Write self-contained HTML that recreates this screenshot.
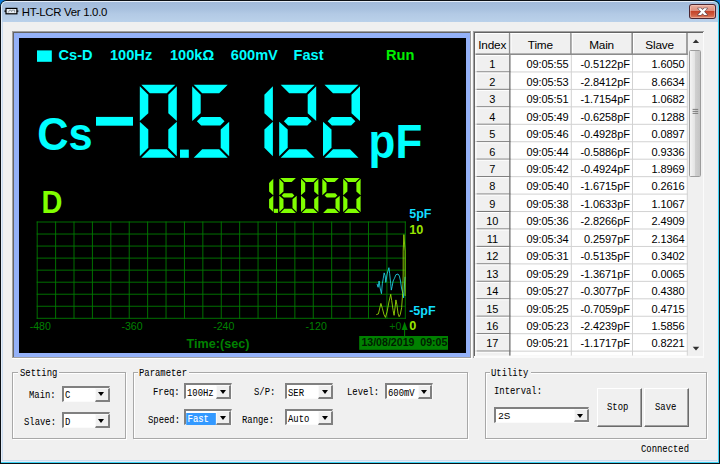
<!DOCTYPE html>
<html><head><meta charset="utf-8"><title>HT-LCR Ver 1.0.0</title>
<style>
html,body{margin:0;padding:0}
body{width:720px;height:464px;position:relative;overflow:hidden;background:#f0f0f0;font-family:"Liberation Sans",sans-serif}
div{position:absolute;box-sizing:border-box}
#frame{left:0;top:0;width:720px;height:464px;background:#0b78d6}
#win{left:0;top:0;width:720px;height:464px;background:#0c1014;border-radius:6.5px 6.5px 0 0}
#win2{left:.9px;top:.8px;width:718.2px;height:461.8px;background:#3fd2f4;border-radius:5.5px 5.5px 0 0}
#win3{left:.9px;top:.8px;width:716.9px;height:460.8px;background:#e4edf8;border-radius:5.5px 5.5px 0 0}
#tbar{left:1.7px;top:1.9px;width:716px;height:20.1px;border-radius:4.5px 4.5px 0 0;
 background:linear-gradient(#a2bbdb 0%,#a8c1df 35%,#b3cae5 60%,#bad1ea 100%)}
#side{left:1.9px;top:22px;width:715.6px;height:439.4px;background:#cbdcf0}
#client{left:3.1px;top:21.8px;width:713.6px;height:438.5px;background:#f0f0f0}
#title{left:21.8px;top:4.6px;font-size:11.4px;letter-spacing:-.29px;color:#000;white-space:nowrap;line-height:14px}
#close{left:688.6px;top:4.2px;width:27.4px;height:14.6px;border-radius:3px;background:#4a2530}
#close i{position:absolute;left:1px;top:1px;right:1px;bottom:1px;border-radius:2.2px;
 background:linear-gradient(#e8aea0 0%,#dc8f7e 45%,#c4442a 50%,#cd5a3e 75%,#dc8468 100%);
 box-shadow:inset 0 0 0 .8px rgba(255,220,210,.55)}
#lcdo{left:12px;top:31px;width:460.4px;height:328.4px;background:#fff}
#lcdo1{left:12px;top:31px;width:459.2px;height:327.2px;background:#a0a0a0}
#lcdo2{left:13.1px;top:32.1px;width:457.3px;height:325.3px;background:#646464}
#lcdb{left:14.3px;top:33.3px;width:455.7px;height:323.9px;background:#94b1f8}
#lcd{left:18.8px;top:38.3px;width:447px;height:314.5px;background:#000}
svg{position:absolute;left:0;top:0}
/* table */
#tbo{left:473.4px;top:31.3px;width:230.8px;height:326.3px;background:#fbfbfb;border-top:1px solid #a0a0a0;border-left:1px solid #a0a0a0}
#tbo1{display:none}
#tbo2{left:474.4px;top:32.2px;width:228.3px;height:323.4px;background:#f0f0f0;border-top:1.2px solid #646464;border-left:1.2px solid #646464}
#tbl{left:473px;top:31px;width:231px;height:324.6px;overflow:hidden}
#tbg{left:2.4px;top:2px;width:226.3px;height:322.6px;background:#fff}
.c{font-size:11px;letter-spacing:-.09px;color:#000;white-space:nowrap;overflow:hidden;text-align:right;padding-right:3.2px}
.c.d{padding-top:.3px}
.c.h{font-size:11.8px;letter-spacing:-.2px;text-align:center;padding:0 1.6px 0 0;padding-top:1.1px}
.c.rh{text-align:center;padding:0 1.3px 0 0;padding-top:.3px}
#sb{left:688px;top:33.2px;width:14.6px;height:322.4px;background:#f0f0f0}
#thumb{left:689.4px;top:49.8px;width:12px;height:126.8px;border:1px solid #9c9c9c;border-radius:1.5px;
 background:linear-gradient(90deg,#f4f4f4 0%,#e4e4e4 45%,#cfcfcf 55%,#c4c4c4 100%)}
/* controls */
.m{font-family:"Liberation Mono",monospace;font-size:11.4px;line-height:13px;color:#000;white-space:pre;
 transform:scaleX(.78);transform-origin:0 0;letter-spacing:0;-webkit-text-stroke:.04px #000}
.gb{border:1px solid #a8a8a8;box-shadow:1px 1px 0 #fff,inset 1px 1px 0 #fff}
.gl{height:6px;background:#f0f0f0}
.cb{background:#fff;border:2px solid #808080;border-right:1px solid #fbfbfb;border-bottom:1px solid #fbfbfb}
.cbt{left:1.2px;top:1.6px;font-family:"Liberation Mono",monospace;font-size:11.4px;line-height:12.4px;white-space:pre;transform:scaleX(.78);transform-origin:0 0;-webkit-text-stroke:.04px #000}
.cbt.s{font-family:"Liberation Sans",sans-serif;font-size:9.8px;transform:none;left:2.1px;top:.6px;-webkit-text-stroke:0}
.sel{background:#3399ff;color:#fff;display:inline-block;padding:0 8.6px 0 1.4px;margin-left:-.6px;height:12.2px;-webkit-text-stroke:.15px #fff}
.cbb{right:-.7px;top:0;bottom:-.7px;width:14.8px;background:#f0f0f0;border:1px solid #fafafa;border-right:2px solid #808080;border-bottom:2px solid #808080}
.cbb i{position:absolute;left:2.6px;top:3.6px;width:0;height:0;border-left:3.6px solid transparent;border-right:3.6px solid transparent;border-top:4px solid #000}
.btn{background:#f0f0f0;border:1px solid #fff;border-right-color:#6a6a6a;border-bottom-color:#6a6a6a;box-shadow:inset -1px -1px 0 #a0a0a0}
</style></head><body>
<div id="frame"></div><div id="win"></div><div id="win2"></div><div id="win3"></div>
<div id="side"></div><div id="tbar"></div><div id="client"></div>
<svg width="720" height="464" viewBox="0 0 720 464" style="z-index:1">
<g fill="none" stroke="#000" stroke-width="1"><rect x="6" y="8.4" width="10.9" height="5.4" fill="#e8eef4" stroke-width="1.2"/>
<path d="M4.4 11.1H6M16.9 11.1H18.4" stroke-width="1.1"/><path d="M8.2 12.6L9.6 10.2H11L11.6 11.6L12.2 10.2H14.6V12.4" stroke="#707880" stroke-width=".7"/></g>
</svg>
<div id="title">HT-LCR Ver 1.0.0</div>
<div id="close"><i></i><svg width="27.4" height="14.6" viewBox="0 0 27.4 14.6"><g stroke="#54404a" stroke-width="1.1" stroke-linejoin="round" fill="#fff"><polygon points="8.9,4.2 12,4.2 18.3,11 15.2,11"/><polygon points="18.3,4.2 15.2,4.2 8.9,11 12,11"/></g><g fill="#fff"><polygon points="8.9,4.2 12,4.2 18.3,11 15.2,11"/><polygon points="18.3,4.2 15.2,4.2 8.9,11 12,11"/></g></svg></div>

<div id="lcdo"></div><div id="lcdo1"></div><div id="lcdo2"></div><div id="lcdb"></div><div id="lcd"></div>
<svg width="720" height="464" viewBox="0 0 720 464">
<g fill="#00ffff">
<rect x="96" y="116.9" width="37" height="8.8"/>
<polygon points="141.3,84.8 175.3,84.8 166.8,93.3 149.8,93.3"/><polygon points="176.8,86.3 168.3,94.8 168.3,113.2 176.8,120.9"/><polygon points="176.8,156.3 168.3,147.8 168.3,129.4 176.8,121.7"/><polygon points="141.3,157.8 175.3,157.8 166.8,149.3 149.8,149.3"/><polygon points="139.8,156.3 148.3,147.8 148.3,129.4 139.8,121.7"/><polygon points="139.8,86.3 148.3,94.8 148.3,113.2 139.8,120.9"/>
<polygon points="193.7,84.8 227.7,84.8 219.2,93.3 202.2,93.3"/><polygon points="192.2,86.3 200.7,94.8 200.7,113.2 192.2,120.9"/><polygon points="196.85,121.3 201.1,117.05 220.3,117.05 224.55,121.3 220.3,125.55 201.1,125.55"/><polygon points="229.2,156.3 220.7,147.8 220.7,129.4 229.2,121.7"/><polygon points="193.7,157.8 227.7,157.8 219.2,149.3 202.2,149.3"/>
<polygon points="272.9,86.3 264.4,94.8 264.4,113.2 272.9,120.9"/><polygon points="272.9,156.3 264.4,147.8 264.4,129.4 272.9,121.7"/>
<polygon points="280.7,84.8 314.7,84.8 306.2,93.3 289.2,93.3"/><polygon points="316.2,86.3 307.7,94.8 307.7,113.2 316.2,120.9"/><polygon points="283.85,121.3 288.1,117.05 307.3,117.05 311.55,121.3 307.3,125.55 288.1,125.55"/><polygon points="279.2,156.3 287.7,147.8 287.7,129.4 279.2,121.7"/><polygon points="280.7,157.8 314.7,157.8 306.2,149.3 289.2,149.3"/>
<polygon points="324.5,84.8 358.5,84.8 350,93.3 333,93.3"/><polygon points="360,86.3 351.5,94.8 351.5,113.2 360,120.9"/><polygon points="327.65,121.3 331.9,117.05 351.1,117.05 355.35,121.3 351.1,125.55 331.9,125.55"/><polygon points="323,156.3 331.5,147.8 331.5,129.4 323,121.7"/><polygon points="324.5,157.8 358.5,157.8 350,149.3 333,149.3"/>
<rect x="180" y="149.6" width="8.8" height="8.2"/>
</g>
<g fill="#80ff00">
<polygon points="273.3,178.7 269.1,182.9 269.1,191.45 273.3,195.15"/><polygon points="273.3,212.1 269.1,207.9 269.1,199.35 273.3,195.65"/>
<polygon points="280.1,177.9 295.9,177.9 291.7,182.1 284.3,182.1"/><polygon points="279.3,178.7 283.5,182.9 283.5,191.45 279.3,195.15"/><polygon points="281.65,195.4 283.75,193.3 292.25,193.3 294.35,195.4 292.25,197.5 283.75,197.5"/><polygon points="279.3,212.1 283.5,207.9 283.5,199.35 279.3,195.65"/><polygon points="280.1,212.9 295.9,212.9 291.7,208.7 284.3,208.7"/><polygon points="296.7,212.1 292.5,207.9 292.5,199.35 296.7,195.65"/>
<polygon points="301.8,177.9 317.6,177.9 313.4,182.1 306,182.1"/><polygon points="318.4,178.7 314.2,182.9 314.2,191.45 318.4,195.15"/><polygon points="318.4,212.1 314.2,207.9 314.2,199.35 318.4,195.65"/><polygon points="301.8,212.9 317.6,212.9 313.4,208.7 306,208.7"/><polygon points="301,212.1 305.2,207.9 305.2,199.35 301,195.65"/><polygon points="301,178.7 305.2,182.9 305.2,191.45 301,195.15"/>
<polygon points="323.1,177.9 338.9,177.9 334.7,182.1 327.3,182.1"/><polygon points="322.3,178.7 326.5,182.9 326.5,191.45 322.3,195.15"/><polygon points="324.65,195.4 326.75,193.3 335.25,193.3 337.35,195.4 335.25,197.5 326.75,197.5"/><polygon points="339.7,212.1 335.5,207.9 335.5,199.35 339.7,195.65"/><polygon points="323.1,212.9 338.9,212.9 334.7,208.7 327.3,208.7"/>
<polygon points="344,177.9 359.8,177.9 355.6,182.1 348.2,182.1"/><polygon points="360.6,178.7 356.4,182.9 356.4,191.45 360.6,195.15"/><polygon points="360.6,212.1 356.4,207.9 356.4,199.35 360.6,195.65"/><polygon points="344,212.9 359.8,212.9 355.6,208.7 348.2,208.7"/><polygon points="343.2,212.1 347.4,207.9 347.4,199.35 343.2,195.65"/><polygon points="343.2,178.7 347.4,182.9 347.4,191.45 343.2,195.15"/>
<rect x="273.9" y="208.8" width="4.2" height="4.1"/>
</g>
<g stroke="#007c00" stroke-width=".9" fill="none">
<path d="M37.2 221.5V318.8M55.61 221.5V318.8M74.01 221.5V318.8M92.42 221.5V318.8M110.82 221.5V318.8M129.23 221.5V318.8M147.63 221.5V318.8M166.04 221.5V318.8M184.44 221.5V318.8M202.85 221.5V318.8M221.25 221.5V318.8M239.66 221.5V318.8M258.06 221.5V318.8M276.47 221.5V318.8M294.87 221.5V318.8M313.27 221.5V318.8M331.68 221.5V318.8M350.09 221.5V318.8M368.49 221.5V318.8M386.9 221.5V318.8M405.3 221.5V318.8M36.7 222H405.8M36.7 234.04H405.8M36.7 246.07H405.8M36.7 258.11H405.8M36.7 270.15H405.8M36.7 282.19H405.8M36.7 294.23H405.8M36.7 306.26H405.8M36.7 318.3H405.8"/>
</g>
<polyline fill="none" stroke="#1fd6e8" stroke-width=".85" stroke-linejoin="round" points="377,283.81 378.12,287.31 379.1,281.01 380.08,288.01 381.48,293.61 382.32,283.81 383.31,278.21 384.15,272.89 385.13,275.69 385.83,282.41 387.09,274.01 388.91,267.7 389.61,273.31 390.73,283.81 391.29,290.11 392.13,286.61 393.11,281.01 394.51,278.21 395.91,274.71 398.01,274.01 399.41,276.11 400.53,281.01 401.51,288.01 402.91,293.61 403.61,297.82 404.31,288.01 405.01,276.81"/>
<polyline fill="none" stroke="#9ee008" stroke-width=".85" stroke-linejoin="round" points="376.3,314.62 378.4,313.92 380.92,303.42 382.32,308.32 384.01,314.62 385.41,317.42 387.09,311.82 388.91,302.02 390.73,294.31 391.71,300.62 393.11,310.42 394.09,315.32 395.21,306.22 395.91,299.92 396.89,304.82 398.01,313.22 399.13,316.72 400.25,314.62 401.65,307.62 402.63,293.61 403.19,274.01 403.19,251.04 403.89,234.65"/>
<polyline fill="none" stroke="#9ee008" stroke-width=".85" stroke-linejoin="round" points="403.89,234.65 405.1,251.04 405.1,295.99"/>
<g font-family="Liberation Sans, sans-serif" font-weight="bold">
<rect x="37" y="50.4" width="14.8" height="11.4" fill="#00ffff"/>
<g fill="#00ffff" font-size="14.6">
<text x="58.5" y="60.3">Cs-D</text>
<text x="110" y="60.3">100Hz</text>
<text x="170" y="60.3">100k&#937;</text>
<text x="230.8" y="60.3">600mV</text>
<text x="293.5" y="60.3">Fast</text>
</g>
<text x="386" y="60.3" font-size="14.6" fill="#00f000">Run</text>
<text transform="translate(37.3,149.8) scale(.922,1)" font-size="47" fill="#00ffff">Cs</text>
<text transform="translate(368.6,158.2) scale(.93,1)" font-size="47.2" fill="#00ffff">pF</text>
<text transform="translate(41.4,212.6) scale(.92,1)" font-size="31.5" fill="#80ff00">D</text>
<text x="409.2" y="217.8" font-size="12.5" fill="#12deff">5pF</text>
<text x="409.2" y="233.5" font-size="12.7" fill="#98e400">10</text>
<text x="409.2" y="314.8" font-size="12.5" fill="#12deff">-5pF</text>
<text x="409.2" y="330.2" font-size="12.7" fill="#98e400">0</text>
<g fill="#008000" font-size="10.6" font-weight="normal" text-anchor="middle">
<text x="40.3" y="330">-480</text>
<text x="132" y="330">-360</text>
<text x="223.8" y="330">-240</text>
<text x="316.2" y="330">-120</text>
<text x="395.3" y="330.2" fill="#007000">+0</text>
</g>
<text x="186.6" y="348.3" font-size="12.6" fill="#008000">Time:(sec)</text>
<polygon points="404.6,321.8 401.6,330 407.6,330" fill="#008000"/>
<rect x="404.1" y="330" width="1" height="6" fill="#008000"/>
<rect x="359.2" y="336" width="88.8" height="13.8" fill="#008000"/>
<text x="361.4" y="345.8" font-size="10.6" fill="#001c00" xml:space="preserve">13/08/2019  09:05</text>
</g>
</svg>

<div id="tbo"></div><div id="tbo1"></div><div id="tbo2"></div>
<div id="tbl">
<svg width="231" height="325" viewBox="0 0 231 325"><rect x="2.5" y="2" width="212.3" height="322.6" fill="#fff"/><rect x="2.5" y="2" width="212.3" height="22" fill="#f0f0f0"/><rect x="2.5" y="2" width="35" height="322.6" fill="#f0f0f0"/><rect x="97.8" y="24" width="1" height="300.6" fill="#d2d2d2"/><rect x="159" y="24" width="1" height="300.6" fill="#d2d2d2"/><rect x="213.8" y="24" width="1" height="300.6" fill="#d2d2d2"/><rect x="37.5" y="40.45" width="177.3" height="1" fill="#d2d2d2"/><rect x="37.5" y="57.9" width="177.3" height="1" fill="#d2d2d2"/><rect x="37.5" y="75.35" width="177.3" height="1" fill="#d2d2d2"/><rect x="37.5" y="92.8" width="177.3" height="1" fill="#d2d2d2"/><rect x="37.5" y="110.25" width="177.3" height="1" fill="#d2d2d2"/><rect x="37.5" y="127.7" width="177.3" height="1" fill="#d2d2d2"/><rect x="37.5" y="145.15" width="177.3" height="1" fill="#d2d2d2"/><rect x="37.5" y="162.6" width="177.3" height="1" fill="#d2d2d2"/><rect x="37.5" y="180.05" width="177.3" height="1" fill="#d2d2d2"/><rect x="37.5" y="197.5" width="177.3" height="1" fill="#d2d2d2"/><rect x="37.5" y="214.95" width="177.3" height="1" fill="#d2d2d2"/><rect x="37.5" y="232.4" width="177.3" height="1" fill="#d2d2d2"/><rect x="37.5" y="249.85" width="177.3" height="1" fill="#d2d2d2"/><rect x="37.5" y="267.3" width="177.3" height="1" fill="#d2d2d2"/><rect x="37.5" y="284.75" width="177.3" height="1" fill="#d2d2d2"/><rect x="37.5" y="302.2" width="177.3" height="1" fill="#d2d2d2"/><rect x="37.5" y="319.65" width="177.3" height="1" fill="#d2d2d2"/><rect x="2.5" y="2" width="35" height="1" fill="#fff"/><rect x="2.5" y="2" width="1" height="22" fill="#fff"/><rect x="35.9" y="2" width="1.6" height="22" fill="#8c8c8c"/><rect x="37.5" y="2" width="61.3" height="1" fill="#fff"/><rect x="37.5" y="2" width="1" height="22" fill="#fff"/><rect x="97.2" y="2" width="1.6" height="22" fill="#8c8c8c"/><rect x="98.8" y="2" width="61.2" height="1" fill="#fff"/><rect x="98.8" y="2" width="1" height="22" fill="#fff"/><rect x="158.4" y="2" width="1.6" height="22" fill="#8c8c8c"/><rect x="160" y="2" width="54.8" height="1" fill="#fff"/><rect x="160" y="2" width="1" height="22" fill="#fff"/><rect x="213.2" y="2" width="1.6" height="22" fill="#8c8c8c"/><rect x="2.5" y="22.4" width="212.3" height="1.6" fill="#8c8c8c"/><rect x="2.5" y="24" width="35" height="1" fill="#fff"/><rect x="2.5" y="40.35" width="35" height="1.1" fill="#7a7a7a"/><rect x="2.5" y="41.45" width="35" height="1" fill="#fff"/><rect x="2.5" y="57.8" width="35" height="1.1" fill="#7a7a7a"/><rect x="2.5" y="58.9" width="35" height="1" fill="#fff"/><rect x="2.5" y="75.25" width="35" height="1.1" fill="#7a7a7a"/><rect x="2.5" y="76.35" width="35" height="1" fill="#fff"/><rect x="2.5" y="92.7" width="35" height="1.1" fill="#7a7a7a"/><rect x="2.5" y="93.8" width="35" height="1" fill="#fff"/><rect x="2.5" y="110.15" width="35" height="1.1" fill="#7a7a7a"/><rect x="2.5" y="111.25" width="35" height="1" fill="#fff"/><rect x="2.5" y="127.6" width="35" height="1.1" fill="#7a7a7a"/><rect x="2.5" y="128.7" width="35" height="1" fill="#fff"/><rect x="2.5" y="145.05" width="35" height="1.1" fill="#7a7a7a"/><rect x="2.5" y="146.15" width="35" height="1" fill="#fff"/><rect x="2.5" y="162.5" width="35" height="1.1" fill="#7a7a7a"/><rect x="2.5" y="163.6" width="35" height="1" fill="#fff"/><rect x="2.5" y="179.95" width="35" height="1.1" fill="#7a7a7a"/><rect x="2.5" y="181.05" width="35" height="1" fill="#fff"/><rect x="2.5" y="197.4" width="35" height="1.1" fill="#7a7a7a"/><rect x="2.5" y="198.5" width="35" height="1" fill="#fff"/><rect x="2.5" y="214.85" width="35" height="1.1" fill="#7a7a7a"/><rect x="2.5" y="215.95" width="35" height="1" fill="#fff"/><rect x="2.5" y="232.3" width="35" height="1.1" fill="#7a7a7a"/><rect x="2.5" y="233.4" width="35" height="1" fill="#fff"/><rect x="2.5" y="249.75" width="35" height="1.1" fill="#7a7a7a"/><rect x="2.5" y="250.85" width="35" height="1" fill="#fff"/><rect x="2.5" y="267.2" width="35" height="1.1" fill="#7a7a7a"/><rect x="2.5" y="268.3" width="35" height="1" fill="#fff"/><rect x="2.5" y="284.65" width="35" height="1.1" fill="#7a7a7a"/><rect x="2.5" y="285.75" width="35" height="1" fill="#fff"/><rect x="2.5" y="302.1" width="35" height="1.1" fill="#7a7a7a"/><rect x="2.5" y="303.2" width="35" height="1" fill="#fff"/><rect x="2.5" y="319.55" width="35" height="1.1" fill="#7a7a7a"/><rect x="2.5" y="320.65" width="35" height="1" fill="#fff"/><rect x="2.5" y="24" width="1" height="300.6" fill="#fff"/><rect x="36.2" y="24" width="1.3" height="300.6" fill="#747474"/></svg>
<div class="c h" style="left:2.5px;top:2px;width:35px;height:22px;line-height:22.6px">Index</div>
<div class="c h" style="left:37.5px;top:2px;width:61.3px;height:22px;line-height:22.6px">Time</div>
<div class="c h" style="left:98.8px;top:2px;width:61.2px;height:22px;line-height:22.6px">Main</div>
<div class="c h" style="left:160px;top:2px;width:54.8px;height:22px;line-height:22.6px">Slave</div>
<div class="c rh" style="left:2.5px;top:24px;width:35px;height:17.45px;line-height:18.05px">1</div>
<div class="c d" style="left:37.5px;top:24px;width:61.3px;height:17.45px;line-height:18.05px">09:05:55</div>
<div class="c d" style="left:98.8px;top:24px;width:61.2px;height:17.45px;line-height:18.05px">-0.5122pF</div>
<div class="c d" style="left:160px;top:24px;width:54.8px;height:17.45px;line-height:18.05px">1.6050</div>
<div class="c rh" style="left:2.5px;top:41.45px;width:35px;height:17.45px;line-height:18.05px">2</div>
<div class="c d" style="left:37.5px;top:41.45px;width:61.3px;height:17.45px;line-height:18.05px">09:05:53</div>
<div class="c d" style="left:98.8px;top:41.45px;width:61.2px;height:17.45px;line-height:18.05px">-2.8412pF</div>
<div class="c d" style="left:160px;top:41.45px;width:54.8px;height:17.45px;line-height:18.05px">8.6634</div>
<div class="c rh" style="left:2.5px;top:58.9px;width:35px;height:17.45px;line-height:18.05px">3</div>
<div class="c d" style="left:37.5px;top:58.9px;width:61.3px;height:17.45px;line-height:18.05px">09:05:51</div>
<div class="c d" style="left:98.8px;top:58.9px;width:61.2px;height:17.45px;line-height:18.05px">-1.7154pF</div>
<div class="c d" style="left:160px;top:58.9px;width:54.8px;height:17.45px;line-height:18.05px">1.0682</div>
<div class="c rh" style="left:2.5px;top:76.35px;width:35px;height:17.45px;line-height:18.05px">4</div>
<div class="c d" style="left:37.5px;top:76.35px;width:61.3px;height:17.45px;line-height:18.05px">09:05:49</div>
<div class="c d" style="left:98.8px;top:76.35px;width:61.2px;height:17.45px;line-height:18.05px">-0.6258pF</div>
<div class="c d" style="left:160px;top:76.35px;width:54.8px;height:17.45px;line-height:18.05px">0.1288</div>
<div class="c rh" style="left:2.5px;top:93.8px;width:35px;height:17.45px;line-height:18.05px">5</div>
<div class="c d" style="left:37.5px;top:93.8px;width:61.3px;height:17.45px;line-height:18.05px">09:05:46</div>
<div class="c d" style="left:98.8px;top:93.8px;width:61.2px;height:17.45px;line-height:18.05px">-0.4928pF</div>
<div class="c d" style="left:160px;top:93.8px;width:54.8px;height:17.45px;line-height:18.05px">0.0897</div>
<div class="c rh" style="left:2.5px;top:111.25px;width:35px;height:17.45px;line-height:18.05px">6</div>
<div class="c d" style="left:37.5px;top:111.25px;width:61.3px;height:17.45px;line-height:18.05px">09:05:44</div>
<div class="c d" style="left:98.8px;top:111.25px;width:61.2px;height:17.45px;line-height:18.05px">-0.5886pF</div>
<div class="c d" style="left:160px;top:111.25px;width:54.8px;height:17.45px;line-height:18.05px">0.9336</div>
<div class="c rh" style="left:2.5px;top:128.7px;width:35px;height:17.45px;line-height:18.05px">7</div>
<div class="c d" style="left:37.5px;top:128.7px;width:61.3px;height:17.45px;line-height:18.05px">09:05:42</div>
<div class="c d" style="left:98.8px;top:128.7px;width:61.2px;height:17.45px;line-height:18.05px">-0.4924pF</div>
<div class="c d" style="left:160px;top:128.7px;width:54.8px;height:17.45px;line-height:18.05px">1.8969</div>
<div class="c rh" style="left:2.5px;top:146.15px;width:35px;height:17.45px;line-height:18.05px">8</div>
<div class="c d" style="left:37.5px;top:146.15px;width:61.3px;height:17.45px;line-height:18.05px">09:05:40</div>
<div class="c d" style="left:98.8px;top:146.15px;width:61.2px;height:17.45px;line-height:18.05px">-1.6715pF</div>
<div class="c d" style="left:160px;top:146.15px;width:54.8px;height:17.45px;line-height:18.05px">0.2616</div>
<div class="c rh" style="left:2.5px;top:163.6px;width:35px;height:17.45px;line-height:18.05px">9</div>
<div class="c d" style="left:37.5px;top:163.6px;width:61.3px;height:17.45px;line-height:18.05px">09:05:38</div>
<div class="c d" style="left:98.8px;top:163.6px;width:61.2px;height:17.45px;line-height:18.05px">-1.0633pF</div>
<div class="c d" style="left:160px;top:163.6px;width:54.8px;height:17.45px;line-height:18.05px">1.1067</div>
<div class="c rh" style="left:2.5px;top:181.05px;width:35px;height:17.45px;line-height:18.05px">10</div>
<div class="c d" style="left:37.5px;top:181.05px;width:61.3px;height:17.45px;line-height:18.05px">09:05:36</div>
<div class="c d" style="left:98.8px;top:181.05px;width:61.2px;height:17.45px;line-height:18.05px">-2.8266pF</div>
<div class="c d" style="left:160px;top:181.05px;width:54.8px;height:17.45px;line-height:18.05px">2.4909</div>
<div class="c rh" style="left:2.5px;top:198.5px;width:35px;height:17.45px;line-height:18.05px">11</div>
<div class="c d" style="left:37.5px;top:198.5px;width:61.3px;height:17.45px;line-height:18.05px">09:05:34</div>
<div class="c d" style="left:98.8px;top:198.5px;width:61.2px;height:17.45px;line-height:18.05px">0.2597pF</div>
<div class="c d" style="left:160px;top:198.5px;width:54.8px;height:17.45px;line-height:18.05px">2.1364</div>
<div class="c rh" style="left:2.5px;top:215.95px;width:35px;height:17.45px;line-height:18.05px">12</div>
<div class="c d" style="left:37.5px;top:215.95px;width:61.3px;height:17.45px;line-height:18.05px">09:05:31</div>
<div class="c d" style="left:98.8px;top:215.95px;width:61.2px;height:17.45px;line-height:18.05px">-0.5135pF</div>
<div class="c d" style="left:160px;top:215.95px;width:54.8px;height:17.45px;line-height:18.05px">0.3402</div>
<div class="c rh" style="left:2.5px;top:233.4px;width:35px;height:17.45px;line-height:18.05px">13</div>
<div class="c d" style="left:37.5px;top:233.4px;width:61.3px;height:17.45px;line-height:18.05px">09:05:29</div>
<div class="c d" style="left:98.8px;top:233.4px;width:61.2px;height:17.45px;line-height:18.05px">-1.3671pF</div>
<div class="c d" style="left:160px;top:233.4px;width:54.8px;height:17.45px;line-height:18.05px">0.0065</div>
<div class="c rh" style="left:2.5px;top:250.85px;width:35px;height:17.45px;line-height:18.05px">14</div>
<div class="c d" style="left:37.5px;top:250.85px;width:61.3px;height:17.45px;line-height:18.05px">09:05:27</div>
<div class="c d" style="left:98.8px;top:250.85px;width:61.2px;height:17.45px;line-height:18.05px">-0.3077pF</div>
<div class="c d" style="left:160px;top:250.85px;width:54.8px;height:17.45px;line-height:18.05px">0.4380</div>
<div class="c rh" style="left:2.5px;top:268.3px;width:35px;height:17.45px;line-height:18.05px">15</div>
<div class="c d" style="left:37.5px;top:268.3px;width:61.3px;height:17.45px;line-height:18.05px">09:05:25</div>
<div class="c d" style="left:98.8px;top:268.3px;width:61.2px;height:17.45px;line-height:18.05px">-0.7059pF</div>
<div class="c d" style="left:160px;top:268.3px;width:54.8px;height:17.45px;line-height:18.05px">0.4715</div>
<div class="c rh" style="left:2.5px;top:285.75px;width:35px;height:17.45px;line-height:18.05px">16</div>
<div class="c d" style="left:37.5px;top:285.75px;width:61.3px;height:17.45px;line-height:18.05px">09:05:23</div>
<div class="c d" style="left:98.8px;top:285.75px;width:61.2px;height:17.45px;line-height:18.05px">-2.4239pF</div>
<div class="c d" style="left:160px;top:285.75px;width:54.8px;height:17.45px;line-height:18.05px">1.5856</div>
<div class="c rh" style="left:2.5px;top:303.2px;width:35px;height:17.45px;line-height:18.05px">17</div>
<div class="c d" style="left:37.5px;top:303.2px;width:61.3px;height:17.45px;line-height:18.05px">09:05:21</div>
<div class="c d" style="left:98.8px;top:303.2px;width:61.2px;height:17.45px;line-height:18.05px">-1.1717pF</div>
<div class="c d" style="left:160px;top:303.2px;width:54.8px;height:17.45px;line-height:18.05px">0.8221</div>
</div>
<div id="sb"></div><div id="thumb"></div>
<svg width="720" height="464" viewBox="0 0 720 464">
<polygon points="692.7,43 699.1,43 695.9,39.4" fill="#303030"/>
<polygon points="692.7,346.8 699.3,346.8 696,350.4" fill="#303030"/>
<path d="M692.6 109.4H698.2M692.6 111.4H698.2M692.6 113.4H698.2" stroke="#707070" stroke-width=".9"/>
</svg>

<div class="gb" style="left:12.4px;top:372.2px;width:113.2px;height:67px"></div><div class="gl" style="left:18.1px;top:370.2px;width:41.1px"></div><div class="m" style="left:19.6px;top:366.8px;">Setting</div>
<div class="gb" style="left:133.2px;top:372.2px;width:334.8px;height:67px"></div><div class="gl" style="left:137.7px;top:370.2px;width:51.5px"></div><div class="m" style="left:139.2px;top:366.8px;">Parameter</div>
<div class="gb" style="left:485.2px;top:372.2px;width:222px;height:67px"></div><div class="gl" style="left:489.7px;top:370.2px;width:41.5px"></div><div class="m" style="left:491.2px;top:366.8px;">Utility</div>
<div class="m" style="left:29.3px;top:388.7px;">Main:</div>
<div class="m" style="left:23.9px;top:416.1px;">Slave:</div>
<div class="cb" style="left:61.8px;top:385.8px;width:48.2px;height:16.4px"><div class="cbt">C</div><div class="cbb"><i></i></div></div>
<div class="cb" style="left:61.8px;top:412px;width:48.2px;height:16.4px"><div class="cbt">D</div><div class="cbb"><i></i></div></div>
<div class="m" style="left:152.6px;top:385.6px;">Freq:</div>
<div class="m" style="left:148px;top:413.5px;">Speed:</div>
<div class="cb" style="left:183.8px;top:383.2px;width:47.8px;height:16.2px"><div class="cbt">100Hz</div><div class="cbb"><i></i></div></div>
<div class="cb" style="left:183.8px;top:409.3px;width:47.8px;height:16.2px"><div class="cbt"><span class="sel">Fast</span></div><div class="cbb"><i></i></div></div>
<div class="m" style="left:254.4px;top:385.7px;">S/P:</div>
<div class="m" style="left:241.8px;top:413.6px;">Range:</div>
<div class="cb" style="left:285.1px;top:383.2px;width:48.2px;height:16.2px"><div class="cbt">SER</div><div class="cbb"><i></i></div></div>
<div class="cb" style="left:285.1px;top:409.3px;width:48.2px;height:16.2px"><div class="cbt">Auto</div><div class="cbb"><i></i></div></div>
<div class="m" style="left:346.6px;top:385.7px;">Level:</div>
<div class="cb" style="left:384.6px;top:383.2px;width:48.2px;height:16.2px"><div class="cbt">600mV</div><div class="cbb"><i></i></div></div>
<div class="m" style="left:494px;top:384.6px;">Interval:</div>
<div class="cb" style="left:494.2px;top:407px;width:94.8px;height:15.6px"><div class="cbt s">2S</div><div class="cbb"><i></i></div></div>
<div class="btn" style="left:597px;top:388px;width:44.8px;height:39px"></div>
<div class="btn" style="left:644.2px;top:388px;width:44.8px;height:39px"></div>
<div class="m" style="left:607.2px;top:401.4px;">Stop</div>
<div class="m" style="left:655px;top:401.4px;">Save</div>
<div class="m" style="left:640.8px;top:442.7px;">Connected</div>
</body></html>
